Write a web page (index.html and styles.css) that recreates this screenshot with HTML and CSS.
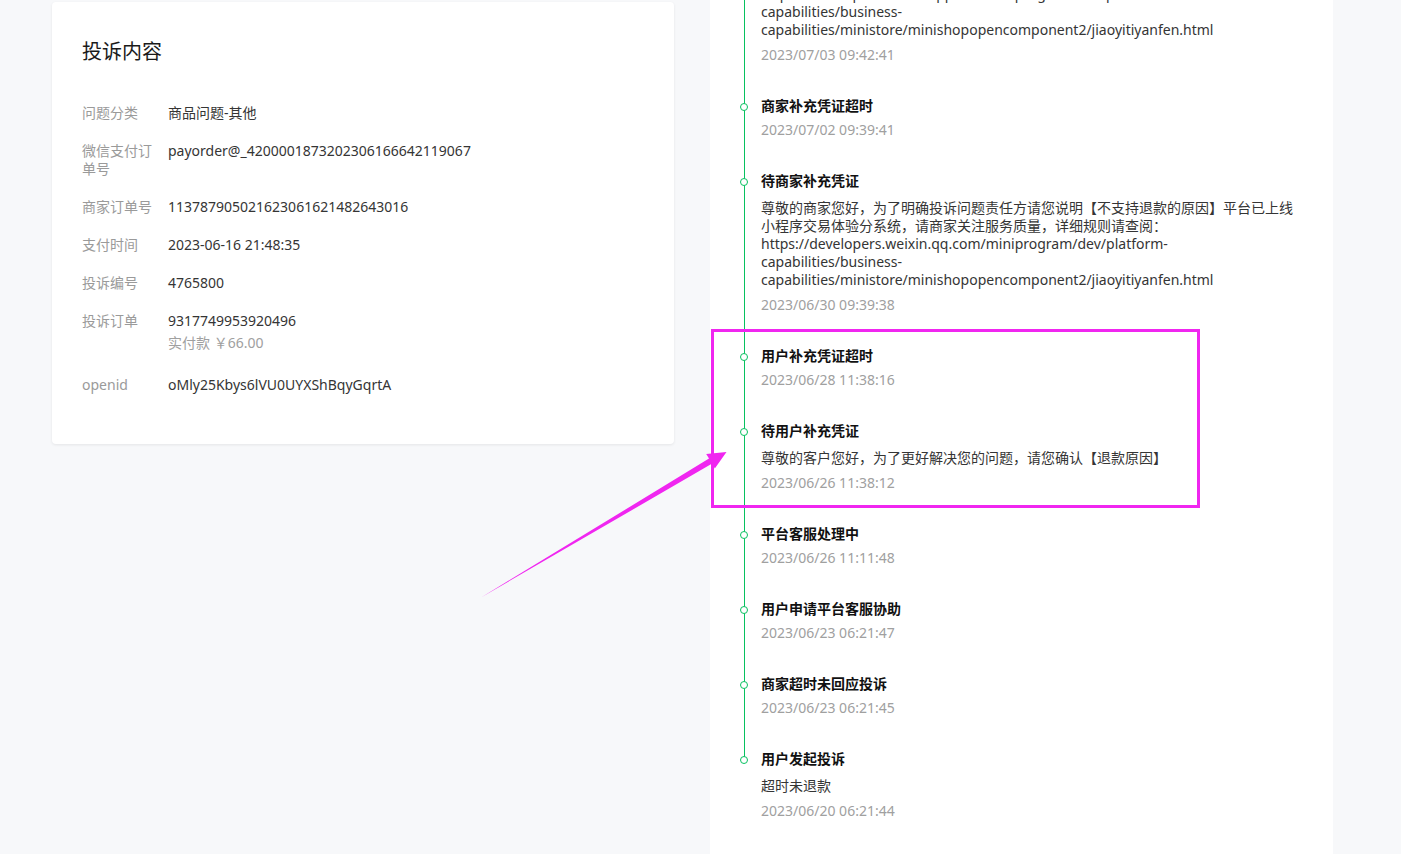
FILE: index.html
```html
<!DOCTYPE html>
<html lang="zh-CN">
<head>
<meta charset="utf-8">
<title>投诉详情</title>
<link rel="stylesheet" href="styles.css">
</head>
<body>
<div class="page">
  <section class="card">
    <h2 class="card-title">投诉内容</h2>
    <div class="row"><div class="label">问题分类</div><div class="value">商品问题-其他</div></div>
    <div class="row"><div class="label">微信支付订单号</div><div class="value">payorder@_4200001873202306166642119067</div></div>
    <div class="row"><div class="label">商家订单号</div><div class="value">113787905021623061621482643016</div></div>
    <div class="row"><div class="label">支付时间</div><div class="value">2023-06-16 21:48:35</div></div>
    <div class="row"><div class="label">投诉编号</div><div class="value">4765800</div></div>
    <div class="row"><div class="label">投诉订单</div><div class="value">9317749953920496<div class="sub">实付款 ￥66.00</div></div></div>
    <div class="row"><div class="label">openid</div><div class="value">oMly25Kbys6lVU0UYXShBqyGqrtA</div></div>
  </section>

  <section class="panel">
    <ul class="timeline">
      <li class="item">
        <div class="t-title">待商家补充凭证</div>
        <div class="t-desc">尊敬的商家您好，为了明确投诉问题责任方请您说明【不支持退款的原因】平台已上线小程序交易体验分系统，请商家关注服务质量，详细规则请查阅：https://developers.weixin.qq.com/miniprogram/dev/platform-capabilities/business-capabilities/ministore/minishopopencomponent2/jiaoyitiyanfen.html</div>
        <div class="t-date">2023/07/03 09:42:41</div>
      </li>
      <li class="item">
        <div class="t-title">商家补充凭证超时</div>
        <div class="t-date">2023/07/02 09:39:41</div>
      </li>
      <li class="item">
        <div class="t-title">待商家补充凭证</div>
        <div class="t-desc">尊敬的商家您好，为了明确投诉问题责任方请您说明【不支持退款的原因】平台已上线小程序交易体验分系统，请商家关注服务质量，详细规则请查阅：https://developers.weixin.qq.com/miniprogram/dev/platform-capabilities/business-capabilities/ministore/minishopopencomponent2/jiaoyitiyanfen.html</div>
        <div class="t-date">2023/06/30 09:39:38</div>
      </li>
      <li class="item">
        <div class="t-title">用户补充凭证超时</div>
        <div class="t-date">2023/06/28 11:38:16</div>
      </li>
      <li class="item">
        <div class="t-title">待用户补充凭证</div>
        <div class="t-desc">尊敬的客户您好，为了更好解决您的问题，请您确认【退款原因】</div>
        <div class="t-date">2023/06/26 11:38:12</div>
      </li>
      <li class="item">
        <div class="t-title">平台客服处理中</div>
        <div class="t-date">2023/06/26 11:11:48</div>
      </li>
      <li class="item">
        <div class="t-title">用户申请平台客服协助</div>
        <div class="t-date">2023/06/23 06:21:47</div>
      </li>
      <li class="item">
        <div class="t-title">商家超时未回应投诉</div>
        <div class="t-date">2023/06/23 06:21:45</div>
      </li>
      <li class="item">
        <div class="t-title">用户发起投诉</div>
        <div class="t-desc">超时未退款</div>
        <div class="t-date">2023/06/20 06:21:44</div>
      </li>
    </ul>
  </section>
</div>

<div class="mark-box"></div>
<svg class="mark-arrow" width="1401" height="854" viewBox="0 0 1401 854" aria-hidden="true">
  <polygon points="481,597.5 709,458.6 706.2,454 726.5,452 714.8,468.6 712.2,463.6" fill="#f026f0"/>
</svg>
</body>
</html>
```

FILE: styles.css
```css
html, body {
  margin: 0;
  padding: 0;
}
body {
  background: #f7f8fa;
  font-family: "Noto Sans", "Noto Sans CJK SC", sans-serif;
  font-size: 14px;
  color: #333;
  height: 854px;
  overflow: hidden;
  position: relative;
}
.page {
  display: flex;
  align-items: flex-start;
  gap: 36px;
  padding-left: 52px;
  height: 854px;
}
.card {
  width: 622px;
  box-sizing: border-box;
  margin-top: 2px;
  padding: 36px 30px 30px;
  background: #fff;
  border-radius: 4px;
  box-shadow: 0 1px 3px rgba(0, 0, 0, 0.08);
}
.card-title {
  margin: 0 0 38px;
  font-size: 20px;
  line-height: 28px;
  font-weight: 400;
  color: #1a1a1a;
}
.row {
  display: flex;
  margin-bottom: 20px;
  line-height: 18px;
}
.label {
  width: 72px;
  flex: none;
  margin-right: 14px;
  color: #9a9a9a;
}
.value {
  color: #353535;
}
.sub {
  margin-top: 4px;
  margin-bottom: 4px;
  color: #a0a0a0;
}
.panel {
  width: 623px;
  height: 854px;
  box-sizing: border-box;
  background: #fff;
  padding: 0 32px 0 51px;
  overflow: hidden;
}
.timeline {
  list-style: none;
  margin: -79px 0 0;
  padding: 0;
}
.item {
  position: relative;
  padding-bottom: 31px;
}
.item::before {
  content: "";
  position: absolute;
  left: -17.5px;
  top: 0;
  bottom: 0;
  width: 1px;
  background: #07c160;
}
.item:last-child::before {
  bottom: auto;
  height: 10px;
}
.item::after {
  content: "";
  position: absolute;
  left: -21.5px;
  top: 6.5px;
  width: 8px;
  height: 8px;
  box-sizing: border-box;
  border: 1px solid #07c160;
  border-radius: 50%;
  background: #fff;
}
.t-title {
  font-weight: 700;
  line-height: 20px;
  color: #111;
}
.t-desc {
  margin-top: 8px;
  line-height: 18px;
  color: #353535;
}
.t-date {
  margin-top: 6px;
  line-height: 20px;
  color: #a0a0a0;
}
.item > .t-title + .t-date {
  margin-top: 4px;
}
.mark-box {
  position: absolute;
  left: 711px;
  top: 329px;
  width: 489px;
  height: 179px;
  box-sizing: border-box;
  border: 3px solid #f026f0;
}
.mark-arrow {
  position: absolute;
  left: 0;
  top: 0;
  pointer-events: none;
}
```
